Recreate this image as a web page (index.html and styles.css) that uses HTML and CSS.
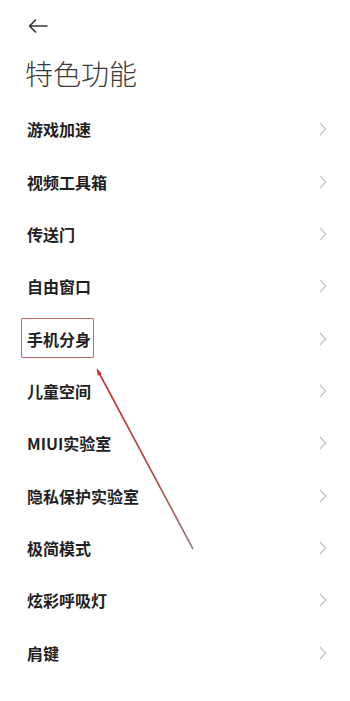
FILE: index.html
```html
<!DOCTYPE html>
<html lang="zh-CN">
<head>
<meta charset="utf-8">
<link rel="stylesheet" href="styles.css">
</head>
<body>
<div class="page">
  <div class="topbar">
    <svg class="back" width="20" height="14" viewBox="0 0 20 14"><path d="M19 7H1.5M7.5 1L1.5 7l6 6" fill="none" stroke="#333" stroke-width="1.6" stroke-linecap="round" stroke-linejoin="round"/></svg>
  </div>
  <h1 class="title">特色功能</h1>
  <ul class="list">
    <li class="row"><span class="label">游戏加速</span><svg class="chev" width="8" height="14" viewBox="0 0 8 14"><path d="M1.2 1.2L6.6 7l-5.4 5.8" fill="none" stroke="#c6c6c6" stroke-width="1.3" stroke-linecap="round" stroke-linejoin="round"/></svg></li>
    <li class="row"><span class="label">视频工具箱</span><svg class="chev" width="8" height="14" viewBox="0 0 8 14"><path d="M1.2 1.2L6.6 7l-5.4 5.8" fill="none" stroke="#c6c6c6" stroke-width="1.3" stroke-linecap="round" stroke-linejoin="round"/></svg></li>
    <li class="row"><span class="label">传送门</span><svg class="chev" width="8" height="14" viewBox="0 0 8 14"><path d="M1.2 1.2L6.6 7l-5.4 5.8" fill="none" stroke="#c6c6c6" stroke-width="1.3" stroke-linecap="round" stroke-linejoin="round"/></svg></li>
    <li class="row"><span class="label">自由窗口</span><svg class="chev" width="8" height="14" viewBox="0 0 8 14"><path d="M1.2 1.2L6.6 7l-5.4 5.8" fill="none" stroke="#c6c6c6" stroke-width="1.3" stroke-linecap="round" stroke-linejoin="round"/></svg></li>
    <li class="row"><span class="label boxed">手机分身</span><svg class="chev" width="8" height="14" viewBox="0 0 8 14"><path d="M1.2 1.2L6.6 7l-5.4 5.8" fill="none" stroke="#c6c6c6" stroke-width="1.3" stroke-linecap="round" stroke-linejoin="round"/></svg></li>
    <li class="row"><span class="label">儿童空间</span><svg class="chev" width="8" height="14" viewBox="0 0 8 14"><path d="M1.2 1.2L6.6 7l-5.4 5.8" fill="none" stroke="#c6c6c6" stroke-width="1.3" stroke-linecap="round" stroke-linejoin="round"/></svg></li>
    <li class="row"><span class="label">MIUI实验室</span><svg class="chev" width="8" height="14" viewBox="0 0 8 14"><path d="M1.2 1.2L6.6 7l-5.4 5.8" fill="none" stroke="#c6c6c6" stroke-width="1.3" stroke-linecap="round" stroke-linejoin="round"/></svg></li>
    <li class="row"><span class="label">隐私保护实验室</span><svg class="chev" width="8" height="14" viewBox="0 0 8 14"><path d="M1.2 1.2L6.6 7l-5.4 5.8" fill="none" stroke="#c6c6c6" stroke-width="1.3" stroke-linecap="round" stroke-linejoin="round"/></svg></li>
    <li class="row"><span class="label">极简模式</span><svg class="chev" width="8" height="14" viewBox="0 0 8 14"><path d="M1.2 1.2L6.6 7l-5.4 5.8" fill="none" stroke="#c6c6c6" stroke-width="1.3" stroke-linecap="round" stroke-linejoin="round"/></svg></li>
    <li class="row"><span class="label">炫彩呼吸灯</span><svg class="chev" width="8" height="14" viewBox="0 0 8 14"><path d="M1.2 1.2L6.6 7l-5.4 5.8" fill="none" stroke="#c6c6c6" stroke-width="1.3" stroke-linecap="round" stroke-linejoin="round"/></svg></li>
    <li class="row"><span class="label">肩键</span><svg class="chev" width="8" height="14" viewBox="0 0 8 14"><path d="M1.2 1.2L6.6 7l-5.4 5.8" fill="none" stroke="#c6c6c6" stroke-width="1.3" stroke-linecap="round" stroke-linejoin="round"/></svg></li>
  </ul>
  <svg class="annot" width="350" height="701" viewBox="0 0 350 701">
    <defs>
      <linearGradient id="lg" x1="97" y1="369" x2="193" y2="549" gradientUnits="userSpaceOnUse">
        <stop offset="0" stop-color="#c8302c"/>
        <stop offset="0.6" stop-color="#b4443f"/>
        <stop offset="1" stop-color="#8c8080"/>
      </linearGradient>
    </defs>
    <path d="M97.5 370L193 549" stroke="url(#lg)" stroke-width="1.6" fill="none"/>
    <path d="M96.5 368.3L101.7 373.7L97.9 375.7Z" fill="#c8302c"/>
  </svg>
</div>
</body>
</html>
```
FILE: styles.css
```css
html, body {
  margin: 0;
  padding: 0;
  background: #ffffff;
}
.page {
  position: relative;
  width: 350px;
  height: 701px;
  overflow: hidden;
  font-family: "Noto Sans CJK SC", "Noto Sans", sans-serif;
}
.topbar {
  height: 52px;
  display: flex;
  align-items: center;
  padding-left: 28px;
}
.back {
  display: block;
}
.title {
  margin: 1px 0 0 0;
  padding-left: 25px;
  font-size: 28px;
  line-height: 40px;
  font-weight: 300;
  color: #3a3a3a;
  letter-spacing: 0;
}
.list {
  list-style: none;
  margin: 10px 0 0 0;
  padding: 0;
}
.row {
  height: 52.35px;
  display: flex;
  align-items: center;
  justify-content: space-between;
  padding: 0 23px 0 27px;
}
.label {
  position: relative;
  font-size: 16px;
  line-height: 22px;
  font-weight: 700;
  color: #1f1f1f;
}
.boxed::after {
  content: "";
  position: absolute;
  left: -6px;
  right: -3px;
  top: -10px;
  bottom: -8px;
  border: 1.5px solid #b86a68;
  border-radius: 1px;
}
.chev {
  display: block;
}
.annot {
  position: absolute;
  left: 0;
  top: 0;
  pointer-events: none;
}
```
